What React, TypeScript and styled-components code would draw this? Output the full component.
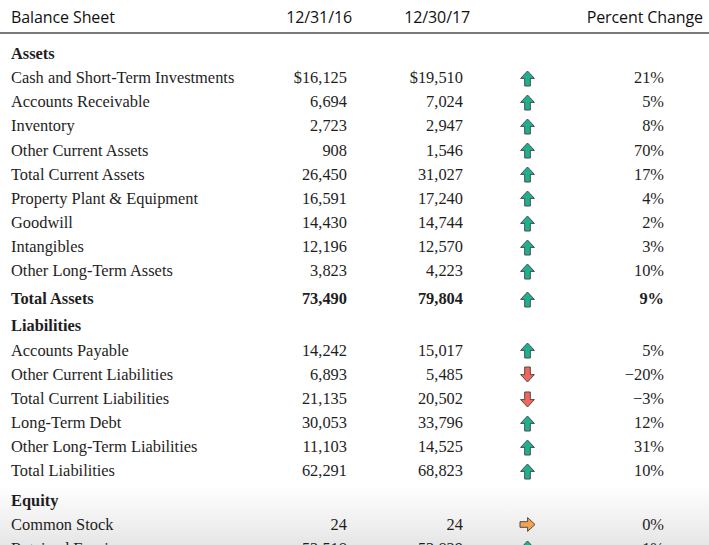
import React from "react";
import styled, { createGlobalStyle } from "styled-components";

const Global = createGlobalStyle`
  html, body {
    margin: 0;
    padding: 0;
    min-height: 545px;
    overflow: hidden;
  }
  body {
    background: linear-gradient(to bottom, #ffffff 0px, #ffffff 486px, #e6e6e6 545px) no-repeat;
    background-size: 100% 545px;
  }
`;

const Page = styled.div`
  width: 709px;
  height: 545px;
  overflow: hidden;
  color: #232323;
`;

const Header = styled.div`
  display: grid;
  grid-template-columns: 251px 90px 118px 1fr;
  align-items: center;
  box-sizing: border-box;
  height: 34px;
  padding: 1px 6px 0 11px;
  border-bottom: 2px solid #7a7a7a;
  font-family: "Open Sans", "Noto Sans", sans-serif;
  font-size: 16px;
  letter-spacing: -0.1px;
  color: #111;
`;

const HeadCell = styled.div<{ $align?: "left" | "right" }>`
  text-align: ${(p) => p.$align ?? "right"};
  white-space: nowrap;
`;

const Body = styled.div`
  padding-top: 8px;
  font-family: "Liberation Serif", "Times New Roman", serif;
  font-size: 16.4px;
  color: #1e1e1e;
`;

const Row = styled.div<{ $gap?: number; $bold?: boolean }>`
  display: grid;
  grid-template-columns: 239px 97px 116px 138px 63px;
  align-items: center;
  height: 24.15px;
  margin-top: ${(p) => p.$gap ?? 0}px;
  padding-left: 11px;
  font-weight: ${(p) => (p.$bold ? 700 : 400)};
  white-space: nowrap;
`;

const Label = styled.div`
  text-align: left;
`;

const Num = styled.div`
  text-align: right;
`;

const ArrowCell = styled.div`
  display: flex;
  justify-content: center;
  align-items: center;
  padding-right: 10px;
  height: 100%;
`;

type Dir = "up" | "down" | "right";

const COLORS: Record<Dir, string> = {
  up: "#1fb08f",
  down: "#f2675c",
  right: "#f5a24e",
};

const ROT: Record<Dir, number> = { up: 0, down: 180, right: 90 };

function Arrow({ dir }: { dir: Dir }) {
  return (
    <svg width="17" height="17" viewBox="0 0 17 17">
      <g transform={`rotate(${ROT[dir]} 8.5 8.5)`}>
        <path
          d="M8.5 1 L15.4 8.4 H11.3 V16 H5.7 V8.4 H1.6 Z"
          fill={COLORS[dir]}
          stroke="#4a4a4a"
          strokeWidth="1"
          strokeLinejoin="round"
        />
      </g>
    </svg>
  );
}

type Item =
  | { kind: "section"; label: string; gap?: number }
  | {
      kind: "row";
      label: string;
      a: string;
      b: string;
      dir: Dir;
      pct: string;
      bold?: boolean;
      gap?: number;
    };

const items: Item[] = [
  { kind: "section", label: "Assets" },
  { kind: "row", label: "Cash and Short-Term Investments", a: "$16,125", b: "$19,510", dir: "up", pct: "21%" },
  { kind: "row", label: "Accounts Receivable", a: "6,694", b: "7,024", dir: "up", pct: "5%" },
  { kind: "row", label: "Inventory", a: "2,723", b: "2,947", dir: "up", pct: "8%" },
  { kind: "row", label: "Other Current Assets", a: "908", b: "1,546", dir: "up", pct: "70%" },
  { kind: "row", label: "Total Current Assets", a: "26,450", b: "31,027", dir: "up", pct: "17%" },
  { kind: "row", label: "Property Plant & Equipment", a: "16,591", b: "17,240", dir: "up", pct: "4%" },
  { kind: "row", label: "Goodwill", a: "14,430", b: "14,744", dir: "up", pct: "2%" },
  { kind: "row", label: "Intangibles", a: "12,196", b: "12,570", dir: "up", pct: "3%" },
  { kind: "row", label: "Other Long-Term Assets", a: "3,823", b: "4,223", dir: "up", pct: "10%" },
  { kind: "row", label: "Total Assets", a: "73,490", b: "79,804", dir: "up", pct: "9%", bold: true, gap: 4 },
  { kind: "section", label: "Liabilities", gap: 2 },
  { kind: "row", label: "Accounts Payable", a: "14,242", b: "15,017", dir: "up", pct: "5%", gap: 1 },
  { kind: "row", label: "Other Current Liabilities", a: "6,893", b: "5,485", dir: "down", pct: "\u221220%" },
  { kind: "row", label: "Total Current Liabilities", a: "21,135", b: "20,502", dir: "down", pct: "\u22123%" },
  { kind: "row", label: "Long-Term Debt", a: "30,053", b: "33,796", dir: "up", pct: "12%" },
  { kind: "row", label: "Other Long-Term Liabilities", a: "11,103", b: "14,525", dir: "up", pct: "31%" },
  { kind: "row", label: "Total Liabilities", a: "62,291", b: "68,823", dir: "up", pct: "10%" },
  { kind: "section", label: "Equity", gap: 5 },
  { kind: "row", label: "Common Stock", a: "24", b: "24", dir: "right", pct: "0%" },
  { kind: "row", label: "Retained Earnings", a: "52,518", b: "53,829", dir: "up", pct: "1%" },
];

export default function App() {
  return (
    <Page>
      <Global />
      <Header>
        <HeadCell $align="left">Balance Sheet</HeadCell>
        <HeadCell>12/31/16</HeadCell>
        <HeadCell>12/30/17</HeadCell>
        <HeadCell>Percent Change</HeadCell>
      </Header>
      <Body>
        {items.map((it, i) =>
          it.kind === "section" ? (
            <Row key={i} $gap={it.gap} $bold>
              <Label>{it.label}</Label>
            </Row>
          ) : (
            <Row key={i} $gap={it.gap} $bold={it.bold}>
              <Label>{it.label}</Label>
              <Num>{it.a}</Num>
              <Num>{it.b}</Num>
              <ArrowCell>
                <Arrow dir={it.dir} />
              </ArrowCell>
              <Num>{it.pct}</Num>
            </Row>
          )
        )}
      </Body>
    </Page>
  );
}
